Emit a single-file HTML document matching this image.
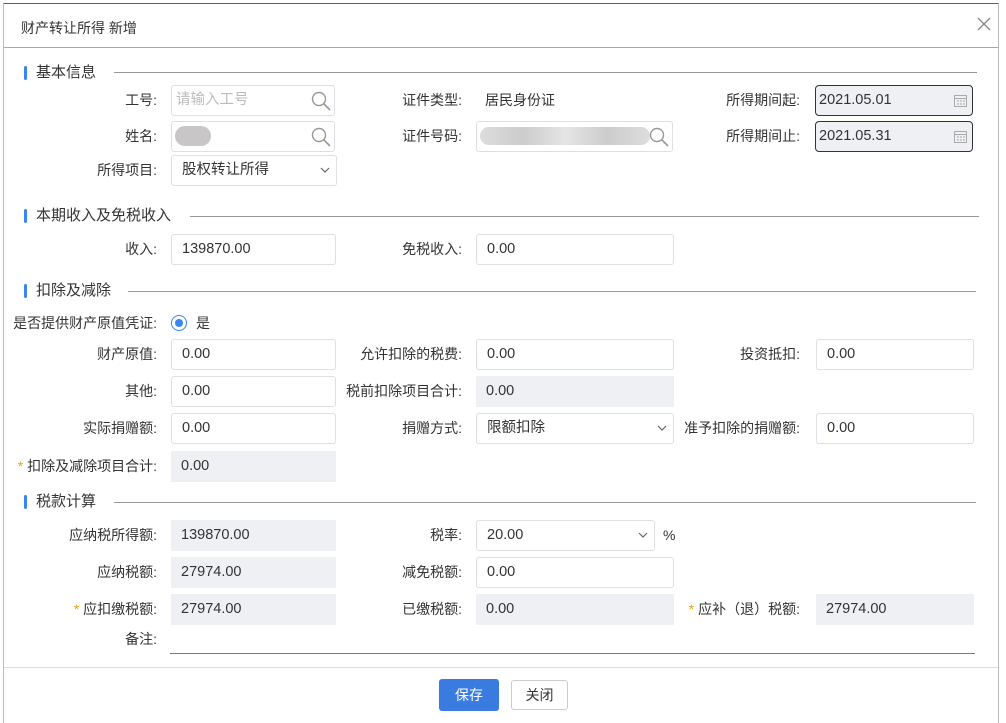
<!DOCTYPE html>
<html><head><meta charset="utf-8"><style>
*{box-sizing:border-box;margin:0;padding:0}
body{width:1006px;height:723px;background:#fff;position:relative;overflow:hidden;font-family:"Liberation Sans","Noto Sans CJK SC",sans-serif;font-size:14px;color:#333}
.dlg{position:absolute;left:3px;top:3px;width:996px;height:720px;background:#fff;border-top:1px solid #2b63c9;border-left:1px solid #bbb;border-right:1px solid #bbb}
.a{position:absolute}
.lab{position:absolute;text-align:right;line-height:31px;height:31px;white-space:nowrap}
.in{position:absolute;height:31px;border:1px solid #dcdfe6;border-radius:3px;line-height:29px;padding-left:10px;background:#fff;font-size:14.5px}
.ro{position:absolute;height:31px;background:#eff0f3;line-height:31px;padding-left:10px;font-size:14.5px}
.sec{position:absolute;left:24px;font-size:15px;height:20px;line-height:20px;padding-left:12px}
.sec:before{content:"";position:absolute;left:0;top:3px;width:3px;height:14px;background:#3c84f0;border-radius:2px}
.hl{position:absolute;height:1px;background:#999}
.st{color:#f39c12}
.ic{position:absolute;right:3px;top:5px}
.ch{position:absolute;right:6px;top:11px}
</style></head><body>
<div class="dlg"></div>
<div class="a" style="left:21px;top:18px;font-size:14px">财产转让所得 新增</div>
<svg class="a" style="left:977px;top:17px" width="14" height="14"><path d="M1 1L13 13M13 1L1 13" stroke="#888" stroke-width="1.3"/></svg>
<div class="hl" style="left:4px;top:47px;width:994px;background:#aaa"></div>

<div class="sec" style="top:63px">基本信息</div><div class="hl" style="left:114px;top:72px;width:863px"></div>
<div class="lab" style="left:60px;width:97px;top:85px">工号:</div>
<div class="in" style="left:171px;top:85px;width:164px;color:#bbb;padding-left:4px">请输入工号<svg class="ic" width="20" height="20"><circle cx="8" cy="8" r="6.5" fill="none" stroke="#999" stroke-width="1.4"/><path d="M13 13L19 19" stroke="#999" stroke-width="1.6"/></svg></div>
<div class="lab" style="left:60px;width:97px;top:121px">姓名:</div>
<div class="in" style="left:171px;top:121px;width:164px;padding-left:3px"><span style="display:inline-block;width:36px;height:20px;margin-top:4px;background:#c8c6c6;border-radius:10px"></span><svg class="ic" width="20" height="20"><circle cx="8" cy="8" r="6.5" fill="none" stroke="#999" stroke-width="1.4"/><path d="M13 13L19 19" stroke="#999" stroke-width="1.6"/></svg></div>
<div class="lab" style="left:60px;width:97px;top:155px">所得项目:</div>
<div class="in" style="left:171px;top:155px;width:166px">股权转让所得<svg class="ch" width="10" height="7"><path d="M1 1L5 5L9 1" fill="none" stroke="#666" stroke-width="1.2"/></svg></div>
<div class="lab" style="left:360px;width:102px;top:85px">证件类型:</div>
<div class="a" style="left:485px;top:85px;line-height:31px">居民身份证</div>
<div class="lab" style="left:360px;width:102px;top:121px">证件号码:</div>
<div class="in" style="left:476px;top:121px;width:197px;padding-left:3px"><span style="display:inline-block;width:170px;height:18px;margin-top:5px;background:linear-gradient(90deg,#ddd,#ccc,#e5e5e5,#ccc,#ddd);border-radius:9px"></span><svg class="ic" width="20" height="20"><circle cx="8" cy="8" r="6.5" fill="none" stroke="#999" stroke-width="1.4"/><path d="M13 13L19 19" stroke="#999" stroke-width="1.6"/></svg></div>
<div class="lab" style="left:690px;width:110px;top:85px">所得期间起:</div>
<div class="in" style="left:815px;top:85px;width:158px;background:#eff0f3;border-color:#333;border-radius:4px;padding-left:3px">2021.05.01<svg class="a" style="right:5px;top:8px" width="13" height="13"><rect x="0.5" y="1.5" width="12" height="11" fill="none" stroke="#aaa"/><path d="M0 4.5H13M3 7h2M6 7h2M9 7h2M3 10h2M6 10h2M9 10h2" stroke="#aaa"/></svg></div>
<div class="lab" style="left:690px;width:110px;top:121px">所得期间止:</div>
<div class="in" style="left:815px;top:121px;width:158px;background:#eff0f3;border-color:#333;border-radius:4px;padding-left:3px">2021.05.31<svg class="a" style="right:5px;top:8px" width="13" height="13"><rect x="0.5" y="1.5" width="12" height="11" fill="none" stroke="#aaa"/><path d="M0 4.5H13M3 7h2M6 7h2M9 7h2M3 10h2M6 10h2M9 10h2" stroke="#aaa"/></svg></div>

<div class="sec" style="top:206px">本期收入及免税收入</div><div class="hl" style="left:190px;top:216px;width:789px"></div>
<div class="lab" style="left:60px;width:97px;top:234px">收入:</div>
<div class="in" style="left:171px;top:234px;width:165px">139870.00</div>
<div class="lab" style="left:360px;width:102px;top:234px">免税收入:</div>
<div class="in" style="left:476px;top:234px;width:198px">0.00</div>

<div class="sec" style="top:281px">扣除及减除</div><div class="hl" style="left:128px;top:291px;width:848px"></div>
<div class="lab" style="left:8px;width:149px;top:308px">是否提供财产原值凭证:</div>
<div class="a" style="left:171px;top:315px;width:16px;height:16px;border:1px solid #3c84f0;border-radius:50%"><div style="margin:3px;width:8px;height:8px;background:#3c84f0;border-radius:50%"></div></div>
<div class="a" style="left:196px;top:308px;line-height:31px">是</div>
<div class="lab" style="left:60px;width:97px;top:339px">财产原值:</div><div class="in" style="left:171px;top:339px;width:165px">0.00</div>
<div class="lab" style="left:60px;width:97px;top:376px">其他:</div><div class="in" style="left:171px;top:376px;width:165px">0.00</div>
<div class="lab" style="left:60px;width:97px;top:413px">实际捐赠额:</div><div class="in" style="left:171px;top:413px;width:165px">0.00</div>
<div class="lab" style="left:8px;width:149px;top:451px"><span class="st">* </span>扣除及减除项目合计:</div><div class="ro" style="left:171px;top:451px;width:165px">0.00</div>
<div class="lab" style="left:330px;width:132px;top:339px">允许扣除的税费:</div><div class="in" style="left:476px;top:339px;width:198px">0.00</div>
<div class="lab" style="left:330px;width:132px;top:376px">税前扣除项目合计:</div><div class="ro" style="left:476px;top:376px;width:198px">0.00</div>
<div class="lab" style="left:330px;width:132px;top:413px">捐赠方式:</div><div class="in" style="left:476px;top:413px;width:198px">限额扣除<svg class="ch" width="10" height="7"><path d="M1 1L5 5L9 1" fill="none" stroke="#666" stroke-width="1.2"/></svg></div>
<div class="lab" style="left:680px;width:120px;top:339px">投资抵扣:</div><div class="in" style="left:816px;top:339px;width:158px">0.00</div>
<div class="lab" style="left:680px;width:120px;top:413px">准予扣除的捐赠额:</div><div class="in" style="left:816px;top:413px;width:158px">0.00</div>

<div class="sec" style="top:492px">税款计算</div><div class="hl" style="left:114px;top:502px;width:862px"></div>
<div class="lab" style="left:40px;width:117px;top:520px">应纳税所得额:</div><div class="ro" style="left:171px;top:520px;width:165px">139870.00</div>
<div class="lab" style="left:40px;width:117px;top:557px">应纳税额:</div><div class="ro" style="left:171px;top:557px;width:165px">27974.00</div>
<div class="lab" style="left:40px;width:117px;top:594px"><span class="st">* </span>应扣缴税额:</div><div class="ro" style="left:171px;top:594px;width:165px">27974.00</div>
<div class="lab" style="left:40px;width:117px;top:624px">备注:</div>
<div class="a" style="left:170px;top:653px;width:805px;height:1px;background:#3c84f0"></div>
<div class="lab" style="left:360px;width:102px;top:520px">税率:</div><div class="in" style="left:476px;top:520px;width:179px">20.00<svg class="ch" width="10" height="7"><path d="M1 1L5 5L9 1" fill="none" stroke="#666" stroke-width="1.2"/></svg></div>
<div class="a" style="left:663px;top:520px;line-height:31px">%</div>
<div class="lab" style="left:360px;width:102px;top:557px">减免税额:</div><div class="in" style="left:476px;top:557px;width:198px">0.00</div>
<div class="lab" style="left:360px;width:102px;top:594px">已缴税额:</div><div class="ro" style="left:476px;top:594px;width:198px">0.00</div>
<div class="lab" style="left:670px;width:130px;top:594px"><span class="st">* </span>应补（退）税额:</div><div class="ro" style="left:816px;top:594px;width:158px">27974.00</div>

<div class="hl" style="left:4px;top:667px;width:994px;background:#ddd"></div>
<div class="a" style="left:439px;top:679px;width:60px;height:32px;background:#3a7be0;border-radius:3px;color:#fff;text-align:center;line-height:32px">保存</div>
<div class="a" style="left:511px;top:680px;width:57px;height:30px;border:1px solid #ccc;border-radius:3px;text-align:center;line-height:28px">关闭</div>
</body></html>
